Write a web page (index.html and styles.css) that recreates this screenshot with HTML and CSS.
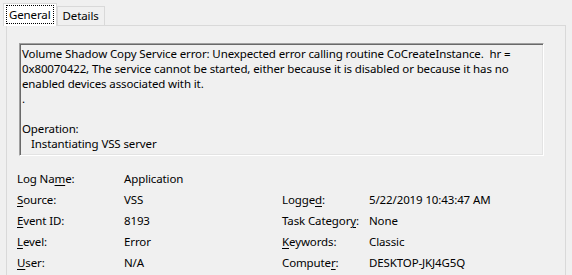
FILE: index.html
```html
<!DOCTYPE html>
<html lang="en">
<head>
    <meta charset="UTF-8">
    <title>Event Properties</title>
    <link rel="stylesheet" href="styles.css">
</head>
<body>
    <div class="tabs">
        <div class="tab selected"><span class="focus">General</span></div>
        <div class="tab">Details</div>
    </div>
    <div class="panel">
        <div class="message-box">
            <div>Volume Shadow Copy Service error: Unexpected error calling routine CoCreateInstance.&nbsp; hr =</div>
            <div>0x80070422, The service cannot be started, either because it is disabled or because it has no</div>
            <div>enabled devices associated with it.</div>
            <div>.</div>
            <div>&nbsp;</div>
            <div>Operation:</div>
            <div class="indent">Instantiating VSS server</div>
        </div>

        <!-- event fields -->
        <div class="fields">
            <div>Log Na<u>m</u>e:</div>
            <div>Application</div>
            <div></div>
            <div></div>

            <div><u>S</u>ource:</div>
            <div>VSS</div>
            <div>Logge<u>d</u>:</div>
            <div>5/22/2019 10:43:47 AM</div>

            <div><u>E</u>vent ID:</div>
            <div>8193</div>
            <div>Task Categor<u>y</u>:</div>
            <div>None</div>

            <div><u>L</u>evel:</div>
            <div>Error</div>
            <div><u>K</u>eywords:</div>
            <div>Classic</div>

            <div><u>U</u>ser:</div>
            <div>N/A</div>
            <div>Compute<u>r</u>:</div>
            <div>DESKTOP-JKJ4G5Q</div>
        </div>
    </div>
</body>
</html>
```

FILE: styles.css
```css
body {
    margin: 0;
    height: 275px;
    overflow: hidden;
    background-color: #f0f0f0;
    font-family: "Noto Sans", "Open Sans", sans-serif;
    font-size: 11.5px;
    letter-spacing: -0.12px;
    color: #000;
    display: flex;
    flex-direction: column;
}

.tabs {
    display: flex;
    align-items: flex-end;
    padding-left: 3px;
    margin-top: 2px;
    height: 23px;
}

.tab {
    height: 19px;
    line-height: 18px;
    padding: 0 5px;
    border: 1px solid #d9d9d9;
    border-bottom: none;
    background-color: #f0f0f0;
    box-sizing: border-box;
}

.tab.selected {
    height: 23px;
    padding: 2px 3px 0 3px;
    background-color: #fff;
    margin-bottom: -1px;
    position: relative;
    z-index: 1;
}

.focus {
    display: inline-block;
    line-height: 17px;
    padding: 0 2px;
    outline: 1px dotted #000;
}

.panel {
    flex: 1;
    margin: 0 6px 0 6px;
    border: 1px solid #d9d9d9;
    border-bottom: none;
    padding: 17px 21px 0 12px;
}

.message-box {
    height: 113px;
    box-sizing: border-box;
    padding: 2px 2px 0 2px;
    line-height: 15px;
    border: 1px solid;
    border-color: #a0a0a0 #fff #fff #a0a0a0;
    box-shadow: inset 1px 1px 0 #696969, inset -1px -1px 0 #e3e3e3;
    white-space: nowrap;
    overflow: hidden;
}

.indent {
    padding-left: 9px;
}

.fields {
    display: grid;
    grid-template-columns: 107px 158px 87px auto;
    grid-auto-rows: 21px;
    align-items: center;
    margin: 12px 0 0 -2px;
}

.fields u {
    text-underline-offset: 2px;
}
```
